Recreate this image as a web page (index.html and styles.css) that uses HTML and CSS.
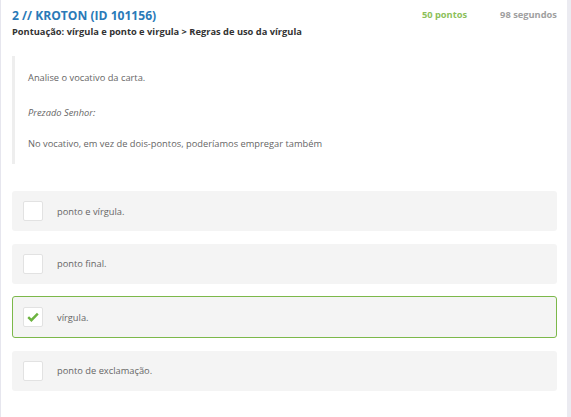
FILE: index.html
```html
<!DOCTYPE html>
<html lang="pt">
<head>
<meta charset="utf-8">
<link rel="stylesheet" href="styles.css">
</head>
<body>
<div class="page">
  <div class="content">
    <div class="head">
      <div class="titles">
        <h1 class="title">2 // KROTON (ID 101156)</h1>
        <div class="subtitle">Pontuação: vírgula e ponto e virgula &gt; Regras de uso da vírgula</div>
      </div>
      <div class="meta">
        <span class="points">50 pontos</span>
        <span class="time">98 segundos</span>
      </div>
    </div>
    <div class="quote">
      <p class="q1">Analise o vocativo da carta.</p>
      <p class="q2"><em>Prezado Senhor:</em></p>
      <p class="q3">No vocativo, em vez de dois-pontos, poderíamos empregar também</p>
    </div>
    <div class="options">
      <div class="option"><span class="box"></span><span class="label">ponto e vírgula.</span></div>
      <div class="option"><span class="box"></span><span class="label">ponto final.</span></div>
      <div class="option selected"><span class="box"><svg width="12" height="10" viewBox="0 0 12 10"><path d="M1.2 5.2 L4.4 8.2 L10.8 1.6" fill="none" stroke="#6cb33f" stroke-width="2.4"/></svg></span><span class="label">vírgula.</span></div>
      <div class="option"><span class="box"></span><span class="label">ponto de exclamação.</span></div>
    </div>
  </div>
  <div class="rail"></div>
</div>
</body>
</html>
```
FILE: styles.css
```css
html, body { margin: 0; padding: 0; background: #fff; }
body { font-family: "Open Sans", "Noto Sans", sans-serif; color: #666; }
.page { display: flex; min-height: 417px; border-left: 1px solid #e6e6ee; box-sizing: border-box; }
.content { flex: 1; padding: 7px 10px 0 11px; }
.rail { width: 4px; background: #ebebf1; }
.head { display: flex; justify-content: space-between; align-items: flex-start; }
.title { margin: 0; font-size: 12.1px; line-height: 17px; font-weight: 700; color: #2a7ab8; }
.subtitle { margin-top: 1px; font-size: 9.3px; line-height: 14px; font-weight: 700; color: #333; }
.meta { display: flex; gap: 33px; padding-top: 1px; font-size: 9.3px; line-height: 14px; font-weight: 700; }
.points { color: #8cbf5a; }
.time { color: #a0a0a0; }
.quote { margin-top: 17px; border-left: 3px solid #eeeeee; padding: 15px 0 13px 13px; font-size: 9.3px; line-height: 14px; }
.quote p { margin: 0; }
.quote .q1 { margin-bottom: 21px; }
.quote .q2 { margin-bottom: 17px; }
.options { margin-top: 27px; display: flex; flex-direction: column; gap: 12.5px; }
.option { display: flex; align-items: center; height: 40px; padding: 0 11px; background: #f4f4f4; border-radius: 3px; box-sizing: border-box; }
.option.selected { border: 1px solid #7cb84a; padding: 0 10px; height: 42px; }
.box { width: 20px; height: 20px; box-sizing: border-box; background: #fff; border: 1px solid #e2e2e2; border-radius: 2px; display: flex; align-items: center; justify-content: center; }
.label { margin-left: 14px; font-size: 9.3px; color: #666; }
```
